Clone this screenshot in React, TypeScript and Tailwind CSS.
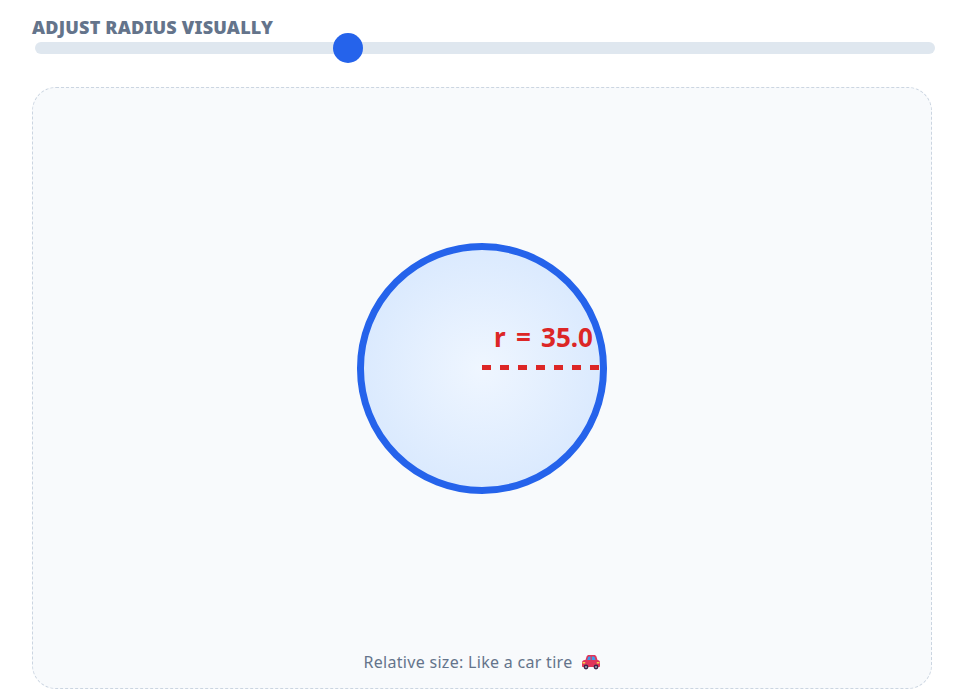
import React from 'react';

const CarIcon: React.FC = () => (
  <svg width="20" height="16" viewBox="0 0 20 16" className="shrink-0">
    <path d="M4.5 6l1-3.2C5.9 1.6 6.8 1 8 1h5c1.2 0 2.1.6 2.5 1.8l1 3.2z" fill="#e0355a" />
    <path d="M6.2 6l.8-2.7c.2-.6.6-.9 1.2-.9h1.3V6zM10.8 2.400h1.600c.6 0 1.100.3 1.300.9l.9 2.700h-3.800z" fill="#3f9be8" />
    <path d="M1 8.500C1 7 2.200 6 3.800 6h12.600C18 6 19 7 19 8.500V12c0 .6-.4 1-1 1H2c-.6 0-1-.4-1-1z" fill="#e0355a" />
    <rect x="1.500" y="8" width="2.800" height="1.600" rx=".6" fill="#fbd34d" />
    <rect x="15.700" y="8" width="2.800" height="1.600" rx=".6" fill="#fbd34d" />
    <circle cx="5" cy="13" r="2.400" fill="#3b2a4a" />
    <circle cx="15" cy="13" r="2.400" fill="#3b2a4a" />
    <circle cx="5" cy="13" r=".9" fill="#b9a9c9" />
    <circle cx="15" cy="13" r=".9" fill="#b9a9c9" />
  </svg>
);

export default function App() {
  return (
    <div className="min-h-[694px] bg-white px-8 font-['Noto_Sans',sans-serif] overflow-hidden">
      <div className="w-[903px]">
        <div className="pt-[16px] text-[18px] leading-[22px] font-black text-[#64748b] tracking-[0.2px]">
          ADJUST RADIUS VISUALLY
        </div>
        <div className="relative ml-[3px] mt-[4px] h-3 w-[900px] rounded-full bg-[#dfe7ef]">
          <div className="absolute left-[298px] top-[-9px] h-[30px] w-[30px] rounded-full bg-[#2563eb]" />
        </div>
      </div>

      <div className="mt-[33px] flex h-[602px] w-[900px] flex-col items-center rounded-3xl border border-dashed border-[#cbd5e1] bg-[#f8fafc]">
        <div className="relative mt-[155px] h-[251px] w-[250px] rounded-full border-[7px] border-[#2563eb] bg-[radial-gradient(circle_closest-side,#eff6ff,#dbeafe)]">
          <div className="absolute left-[130px] top-[70px] text-[26px] leading-[34px] font-bold text-[#dc2626] whitespace-nowrap [word-spacing:3.5px]">
            r = 35.0
          </div>
          <svg className="absolute left-[118px] top-[115px]" width="118" height="5">
            <line x1="0" y1="2.500" x2="118" y2="2.500" stroke="#dc2626" strokeWidth="5" strokeDasharray="9 9" />
          </svg>
        </div>
        <div className="mt-auto mb-[14px] flex items-center gap-[8px] text-[16px] leading-[24px] tracking-[0.3px] text-[#64748b]">
          <span>Relative size: Like a car tire</span>
          <CarIcon />
        </div>
      </div>
    </div>
  );
}
